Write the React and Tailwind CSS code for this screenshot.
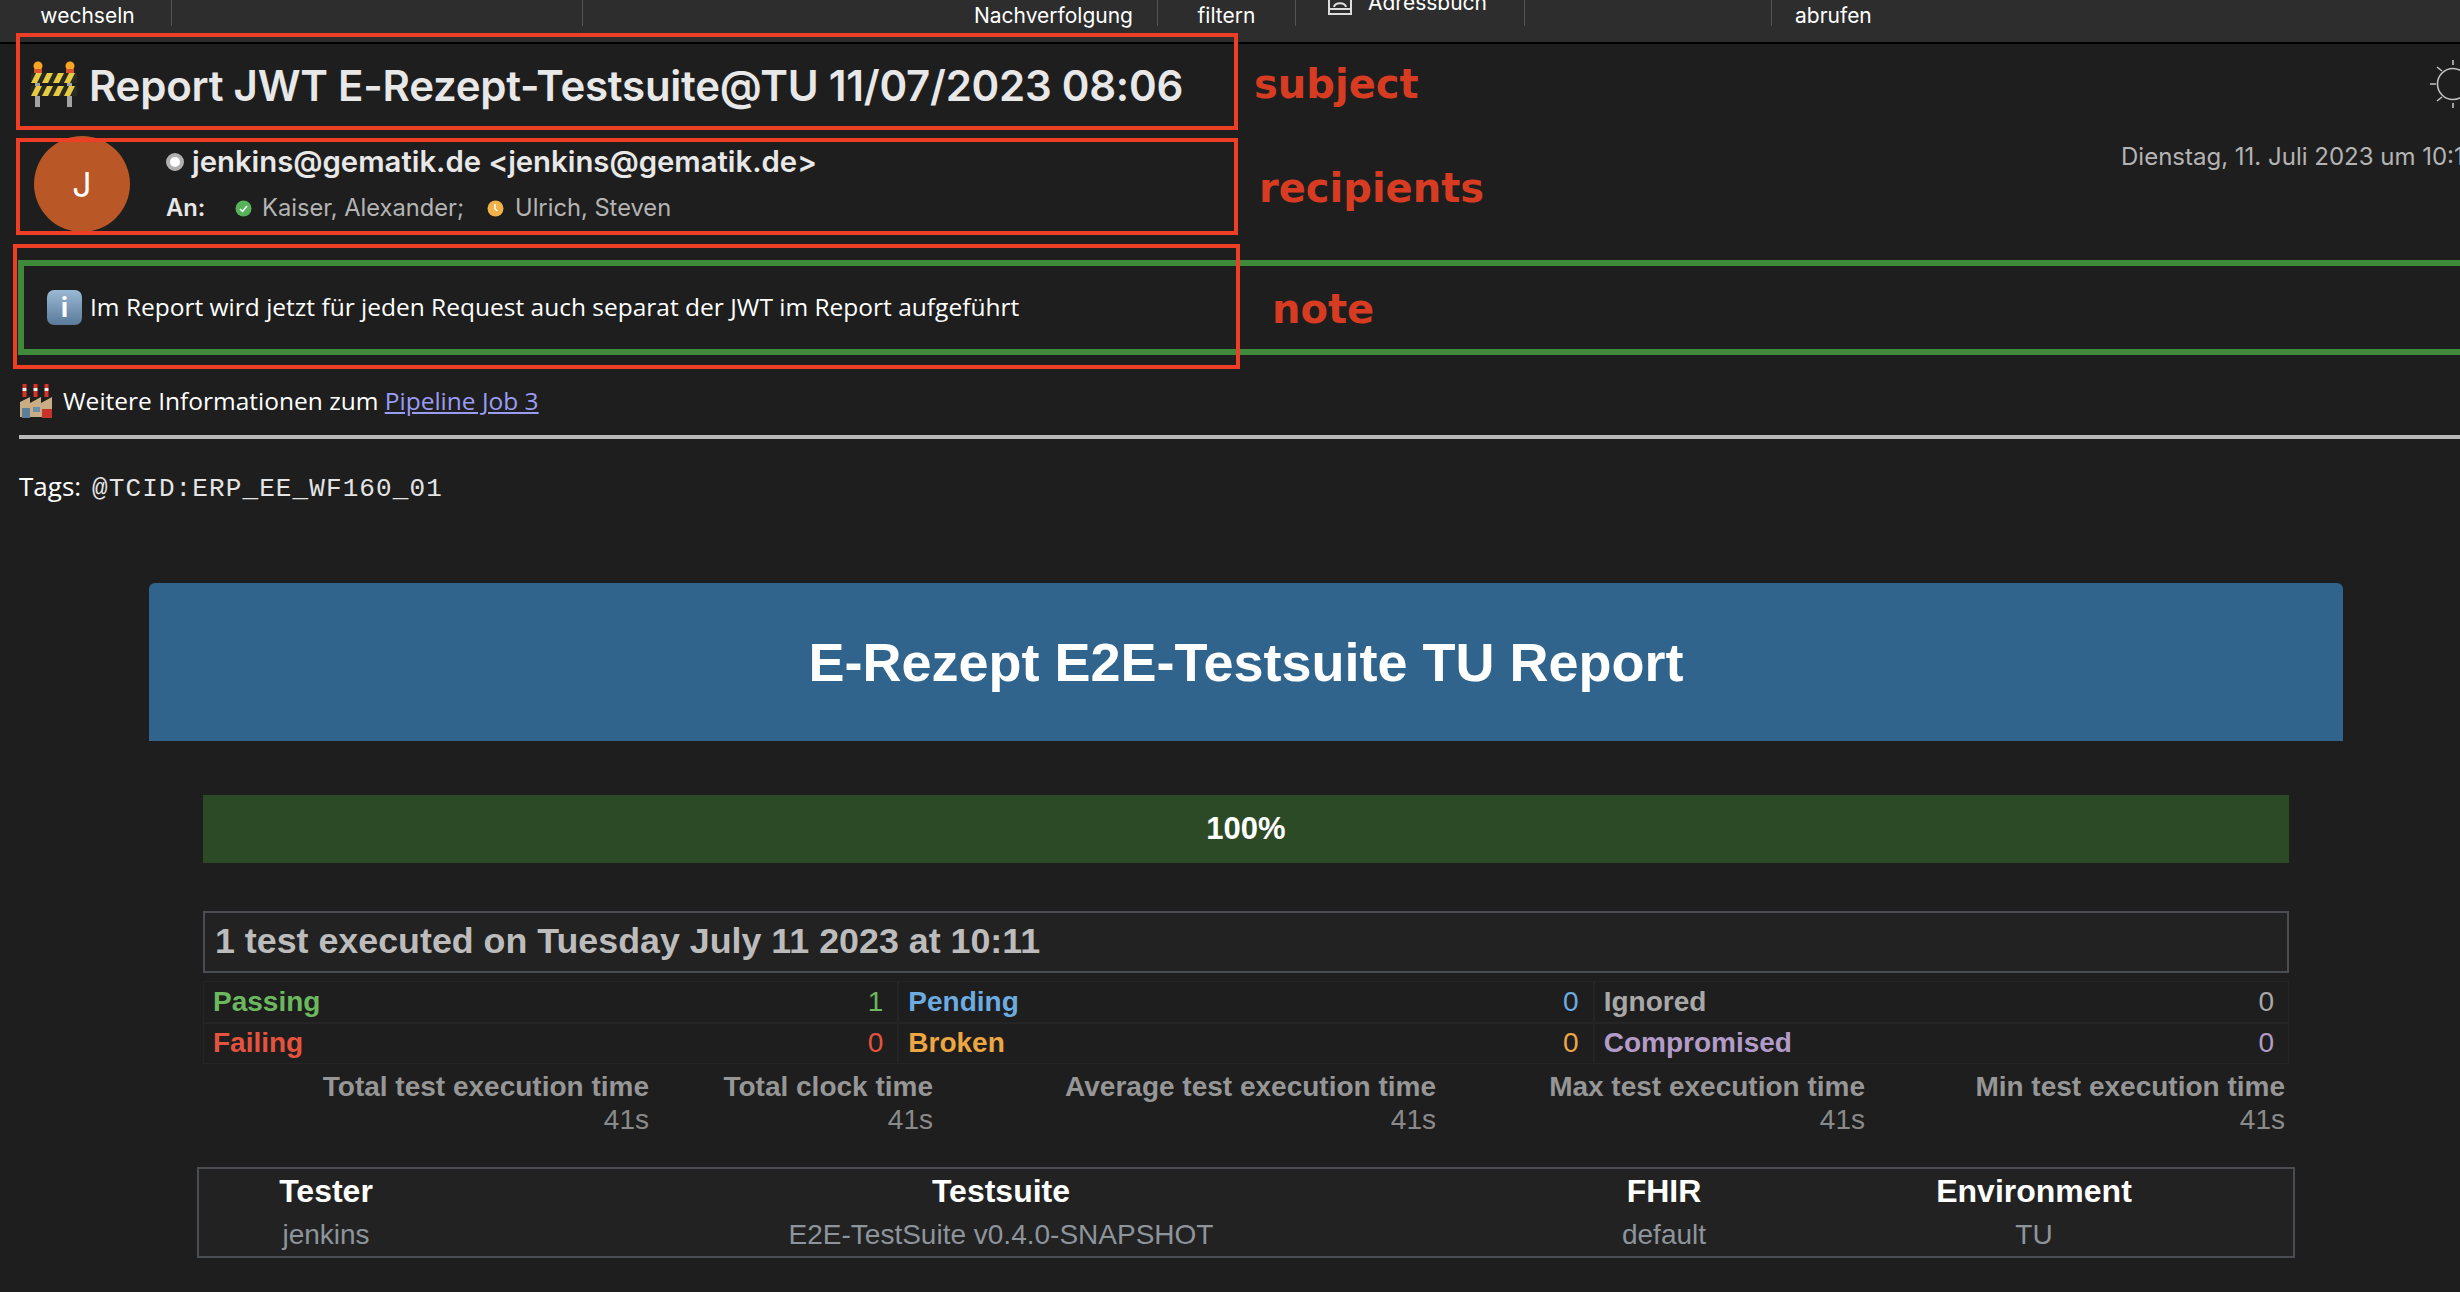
const sans = 'font-["Liberation_Sans",Arial,sans-serif]';
const ui = 'font-[Inter,"Noto_Sans",sans-serif]';

function Barrier() {
  return (
    <svg width="48" height="48" viewBox="0 0 48 48" className="shrink-0 mt-[1px]">
      <rect x="5" y="10" width="5" height="37" fill="#a3a3a3" />
      <rect x="37" y="10" width="5" height="37" fill="#a3a3a3" />
      <circle cx="8" cy="6" r="4.5" fill="#f6a623" />
      <circle cx="40" cy="6" r="4.5" fill="#f6a623" />
      <rect x="4" y="9" width="8" height="4" fill="#d9532b" />
      <rect x="36" y="9" width="8" height="4" fill="#d9532b" />
      {[13, 26].map((y) => (
        <g key={y}>
          <rect x="1" y={y} width="46" height="10" fill="#2a2a22" />
          {[1, 12, 23, 34].map((x) => (
            <path key={x} d={`M${x} ${y + 10}l5 -10h6l-5 10z`} fill="#e6cb45" />
          ))}
        </g>
      ))}
    </svg>
  );
}

function Factory() {
  return (
    <svg width="35" height="35" viewBox="0 0 35 35" className="shrink-0">
      <path d="M1 34V19l10-5v6l11-6v6l11-6v20z" fill="#c9ad84" />
      {[5, 16, 27].map((x) => (
        <g key={x}>
          <rect x={x - 1.5} y="1" width="4" height="4" fill="#d8332b" />
          <rect x={x - 1.5} y="5" width="4" height="3" fill="#eee" />
          <rect x={x - 1.5} y="8" width="4" height="6" fill="#d8332b" />
        </g>
      ))}
      <rect x="3" y="25" width="8" height="10" fill="#5b7f9b" />
      <rect x="14" y="24" width="7" height="5" fill="#6c8ea8" />
      <rect x="23" y="26" width="10" height="9" fill="#c9342a" />
    </svg>
  );
}

function Sun() {
  return (
    <svg width="40" height="60" viewBox="0 0 40 60" fill="none" stroke="#c2c2c2" strokeWidth="1.6">
      <circle cx="33" cy="29" r="15.5" />
      <path d="M33 5v5M33 48v5M10 29h6M17 12l5 4M17 46l5-4" />
    </svg>
  );
}

function Status({ color, check }) {
  return (
    <svg width="17" height="17" viewBox="0 0 17 17" className="shrink-0">
      <circle cx="8.5" cy="8.5" r="8" fill={color} />
      {check ? (
        <path d="M5 9l2.5 2.5L12 6" fill="none" stroke="#fff" strokeWidth="1.5" />
      ) : (
        <path d="M8 4v5l2.5 2" fill="none" stroke="#fff" strokeWidth="1.5" />
      )}
    </svg>
  );
}

function Stat({ label, value, color }) {
  return (
    <div className={`flex justify-between items-center h-[41.5px] px-[9px] border border-[#252525] text-[28px] font-bold ${color}`}>
      <span>{label}</span>
      <span className="font-normal pr-[5px]">{value}</span>
    </div>
  );
}

function Time({ label, className }) {
  return (
    <div className={`shrink-0 text-right leading-[33px] text-[#969696] ${className}`}>
      <div className="font-bold">{label}</div>
      <div className="text-[#8a8a8a]">41s</div>
    </div>
  );
}

function Env({ title, value, className }) {
  return (
    <div className={`shrink-0 text-center ${className}`}>
      <div className="text-[32px] font-bold text-white leading-[44px]">{title}</div>
      <div className="text-[28px] text-[#8e949c] leading-[44px]">{value}</div>
    </div>
  );
}

export default function App() {
  return (
    <div className={`relative w-[2460px] h-[1292px] overflow-hidden bg-[#1e1e1e] ${ui}`}>
      <header className="h-[44px] bg-[#2d2d2d] border-b-[2px] border-black flex text-[21px] text-white leading-none overflow-hidden">
        <div className="w-[172px] h-[26px] border-r border-[#555] text-center pt-[5px] pl-[4px]">wechseln</div>
        <div className="w-[411px] h-[26px] border-r border-[#555]" />
        <div className="w-[575px] h-[26px] border-r border-[#555] text-right pr-[24px] pt-[5px]">Nachverfolgung</div>
        <div className="w-[138px] h-[26px] border-r border-[#555] text-center pt-[5px]">filtern</div>
        <div className="w-[229px] h-[26px] border-r border-[#555] relative overflow-hidden">
          <svg width="26" height="16" viewBox="0 0 26 16" fill="none" stroke="#ddd" strokeWidth="2" className="absolute left-[31px] top-0">
            <path d="M2 0v14h22V0M2 9h22M7 7c1-5 11-5 12 0" />
          </svg>
          <span className="absolute left-[72px] -top-[8px] leading-[21px]">Adressbuch</span>
        </div>
        <div className="w-[247px] h-[26px] border-r border-[#555]" />
        <div className="pl-[23px] pt-[5px]">abrufen</div>
      </header>

      <section className="relative h-[82px] pl-[30px] pt-[15px] flex items-start gap-[11px]">
        <Barrier />
        <h1 className="text-[42px] leading-[54px] font-semibold text-[#e8e8e8] tracking-[-0.25px]">Report JWT E-Rezept-Testsuite@TU 11/07/2023 08:06</h1>
        <div className="absolute right-0 top-[11px]"><Sun /></div>
      </section>

      <section className="relative h-[96px] pl-[34px] flex">
        <div className="mt-[10px] w-[96px] h-[96px] rounded-full bg-[#b95726] flex items-center justify-center text-[34px] text-white">J</div>
        <div className="pl-[36px] pt-[18px]">
          <div className="flex items-center gap-[8px] text-[29.3px] leading-[36px] font-semibold text-[#e8e8e8]">
            <span className="w-[18px] h-[18px] rounded-full border-[4px] border-[#b0b0b0] bg-white" />
            jenkins@gematik.de &lt;jenkins@gematik.de&gt;
          </div>
          <div className="flex items-center text-[23.7px] leading-[34px] mt-[11px] text-[#b4b4b4]">
            <span className="font-semibold text-[#e8e8e8] w-[69px]">An:</span>
            <Status color="#56b35a" check />
            <span className="ml-[10px] w-[225px] whitespace-nowrap">Kaiser, Alexander;</span>
            <Status color="#f2b24a" />
            <span className="ml-[11px]">Ulrich, Steven</span>
          </div>
        </div>
        <div className="absolute right-0 top-[13px] w-[339px] h-[36px] overflow-hidden whitespace-nowrap text-[24px] text-[#b4b4b4]">Dienstag, 11. Juli 2023 um 10:11</div>
      </section>

      <section className={`mt-[38px] ml-[18px] h-[95px] border-[6px] border-r-0 border-[#3f8a3a] flex items-center pl-[23px] gap-[8px] text-[24.5px] text-white font-["Open_Sans",sans-serif]`}>
        <span className="w-[35px] h-[35px] rounded-[7px] bg-gradient-to-b from-[#9ab9d4] to-[#5a7a9a] flex items-center justify-center text-[26px] text-white font-bold">i</span>
        Im Report wird jetzt für jeden Request auch separat der JWT im Report aufgeführt
      </section>

      <section className='mt-[28px] ml-[19px] h-[35px] flex items-center gap-[9px] text-[24.5px] text-white font-["Open_Sans",sans-serif]'>
        <Factory />
        <span className="pt-[2px]">Weitere Informationen zum <a className="text-[#9a9cf3] underline">Pipeline Job 3</a></span>
      </section>
      <hr className="mt-[17px] ml-[19px] border-0 h-[4px] bg-[#b9b9b9]" />
      <p className='mt-[31px] ml-[19px] h-[32px] flex items-baseline gap-[11px] text-[26px] leading-[32px] font-medium text-white font-["Open_Sans",sans-serif]'>
        <span>Tags:</span><span className='font-["Liberation_Mono",monospace] font-normal text-[26px] tracking-[1.1px] text-[#e4e4e4]'>@TCID:ERP_EE_WF160_01</span>
      </p>

      <main className={`ml-[149px] w-[2194px] mt-[81px] ${sans}`}>
        <div className="h-[158px] bg-[#30648c] rounded-t-[6px] flex items-center justify-center text-[54px] font-bold text-white">E-Rezept E2E-Testsuite TU Report</div>
        <div className="px-[54px] pt-[54px]">
          <div className="h-[68px] bg-[#2d4a26] flex items-center justify-center text-[31px] font-bold text-white">100%</div>
          <div className="mt-[48px] h-[62px] border-[2px] border-[#4a4d52] bg-[#222222] flex items-center px-[10px] text-[35.8px] font-bold text-[#bcbcbc]">1 test executed on Tuesday July 11 2023 at 10:11</div>
          <div className="mt-[8px] grid grid-cols-3">
            <Stat label="Passing" value="1" color="text-[#6cb85f]" />
            <Stat label="Pending" value="0" color="text-[#6cace0]" />
            <Stat label="Ignored" value="0" color="text-[#a8a8a8]" />
            <Stat label="Failing" value="0" color="text-[#e5533f]" />
            <Stat label="Broken" value="0" color="text-[#eca743]" />
            <Stat label="Compromised" value="0" color="text-[#b39bc8]" />
          </div>
          <div className="flex mt-[6px] text-[28px]">
            <Time label="Total test execution time" className="w-[446px]" />
            <Time label="Total clock time" className="w-[284px]" />
            <Time label="Average test execution time" className="w-[503px]" />
            <Time label="Max test execution time" className="w-[429px]" />
            <Time label="Min test execution time" className="w-[420px]" />
          </div>
          <div className="-mx-[6px] mt-[31px] h-[91px] border-[2px] border-[#4a4d52] bg-[#222222] flex">
            <Env title="Tester" value="jenkins" className="w-[254px]" />
            <Env title="Testsuite" value="E2E-TestSuite v0.4.0-SNAPSHOT" className="w-[1096px]" />
            <Env title="FHIR" value="default" className="w-[230px]" />
            <Env title="Environment" value="TU" className="w-[510px]" />
          </div>
        </div>
      </main>

      {/* annotations laid over the screenshot */}
      <div className="absolute left-[16px] top-[33px] w-[1222px] h-[97px] border-[4px] border-[#ee3e26]" />
      <div className="absolute left-[16px] top-[138px] w-[1222px] h-[97px] border-[4px] border-[#ee3e26]" />
      <div className="absolute left-[13px] top-[244px] w-[1227px] h-[125px] border-[4px] border-[#ee3e26]" />
      <div className="absolute left-[1254px] top-[54px] text-[40px] font-bold text-[#d73c22] font-['DejaVu_Sans',sans-serif]">subject</div>
      <div className="absolute left-[1259px] top-[158px] text-[40px] font-bold text-[#d73c22] font-['DejaVu_Sans',sans-serif]">recipients</div>
      <div className="absolute left-[1272px] top-[279px] text-[40px] font-bold text-[#d73c22] font-['DejaVu_Sans',sans-serif]">note</div>
    </div>
  );
}
